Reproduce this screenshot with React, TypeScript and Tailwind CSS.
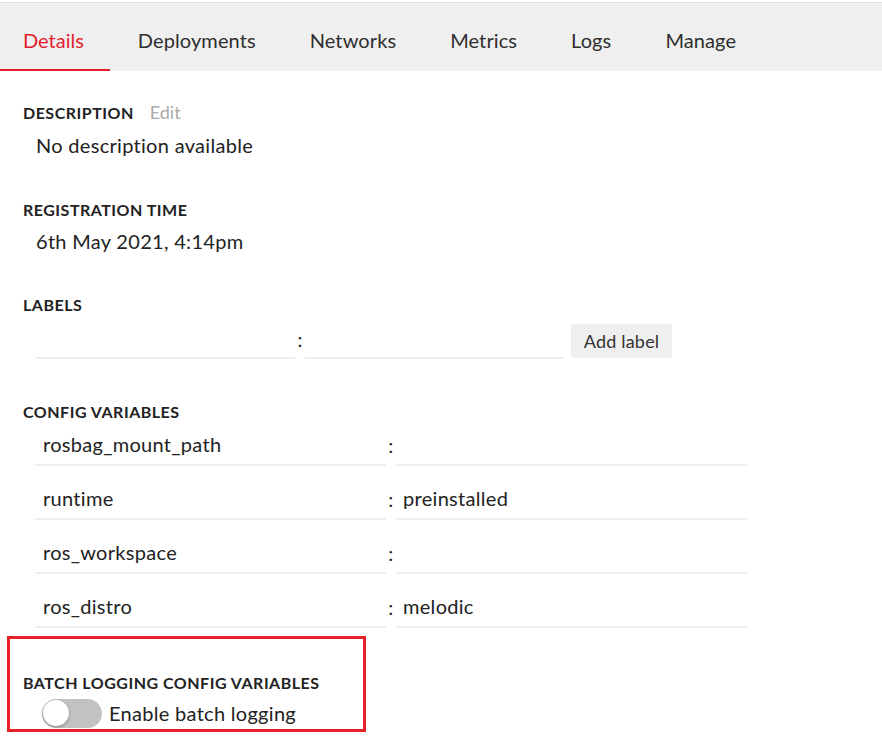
import React from "react";

const tabs = ["Details", "Deployments", "Networks", "Metrics", "Logs", "Manage"];

function Heading({ children }: { children: React.ReactNode }) {
  return (
    <div className="text-[16px] leading-[20px] font-bold text-[#222] tracking-[0.5px]">{children}</div>
  );
}

function ConfigRow({ k, v }: { k: string; v: string }) {
  return (
    <div className="flex items-stretch h-[42px] mb-[12px] tracking-[0.3px]">
      <div className="w-[351px] border-b-2 border-[#eeeeee] pl-[8px] flex items-center text-[20px] text-[#222]">
        {k}
      </div>
      <div className="w-[10px] flex items-center justify-center text-[20px] text-[#222]">:</div>
      <div className="w-[351px] border-b-2 border-[#eeeeee] pl-[7px] flex items-center text-[20px] text-[#222]">
        {v}
      </div>
    </div>
  );
}

export default function App() {
  return (
    <div className="w-[882px] h-[742px] bg-white pt-[2px] font-['Lato','Open_Sans',sans-serif] overflow-hidden">
      <div className="border-t border-[#e2e2e2] h-[69px] bg-[#efefef] flex">
        {tabs.map((t, i) => (
          <div
            key={t}
            className={
              "relative h-full flex items-center pt-[6px] text-[20px] " +
              (i === 0 ? "pl-[23px] pr-[26px] text-[#e31e2d]" : "px-[27px] text-[#2e2e2e] tracking-[0.1px]") +
              (i === 1 ? " pl-[28px]" : "")
            }
          >
            {t}
            {i === 0 && <div className="absolute left-0 right-0 bottom-0 h-[2px] bg-[#e31e2d]" />}
          </div>
        ))}
      </div>

      <div className="pl-[23px]">
        <div className="mt-[31px] flex items-baseline">
          <Heading>DESCRIPTION</Heading>
          <span className="ml-[16px] text-[18px] leading-[20px] text-[#aaaaaa]">Edit</span>
        </div>
        <div className="mt-[8px] pl-[13px] text-[20px] leading-[28px] text-[#222] tracking-[0.3px]">No description available</div>

        <div className="mt-[41px]">
          <Heading>REGISTRATION TIME</Heading>
        </div>
        <div className="mt-[7px] pl-[13px] text-[20px] leading-[28px] text-[#222] tracking-[0.3px]">6th May 2021, 4:14pm</div>

        <div className="mt-[40px]">
          <Heading>LABELS</Heading>
        </div>
        <div className="mt-[9px] pl-[12px] flex items-stretch h-[35px]">
          <div className="w-[260px] border-b-2 border-[#eeeeee]" />
          <div className="w-[10px] flex items-center justify-center text-[20px] text-[#222] pb-[6px]">:</div>
          <div className="w-[259px] border-b-2 border-[#eeeeee]" />
          <button className="ml-[7px] w-[101px] h-[34px] rounded-[3px] bg-[#efefef] text-[18px] text-[#333] flex items-center justify-center tracking-[0.2px]">
            Add label
          </button>
        </div>

        <div className="mt-[43px]">
          <Heading>CONFIG VARIABLES</Heading>
        </div>
        <div className="mt-[2px] pl-[12px]">
          <ConfigRow k="rosbag_mount_path" v="" />
          <ConfigRow k="runtime" v="preinstalled" />
          <ConfigRow k="ros_workspace" v="" />
          <ConfigRow k="ros_distro" v="melodic" />
        </div>

        <div className="-ml-[16px] -mt-[4px] w-[359px] h-[96px] border-[3px] border-[#e8212b] pl-[13px] pt-[34px]">
          <Heading>BATCH LOGGING CONFIG VARIABLES</Heading>
          <div className="mt-[5px] flex items-center">
            <div className="ml-[19px] w-[60px] h-[29px] rounded-full bg-[#c2c2c2] relative flex items-center">
              <div className="ml-[1px] w-[26px] h-[26px] rounded-full bg-white shadow-[0_1px_3px_rgba(0,0,0,0.35)]" />
            </div>
            <span className="ml-[7px] text-[20px] text-[#222] tracking-[0.3px]">Enable batch logging</span>
          </div>
        </div>
      </div>
    </div>
  );
}
